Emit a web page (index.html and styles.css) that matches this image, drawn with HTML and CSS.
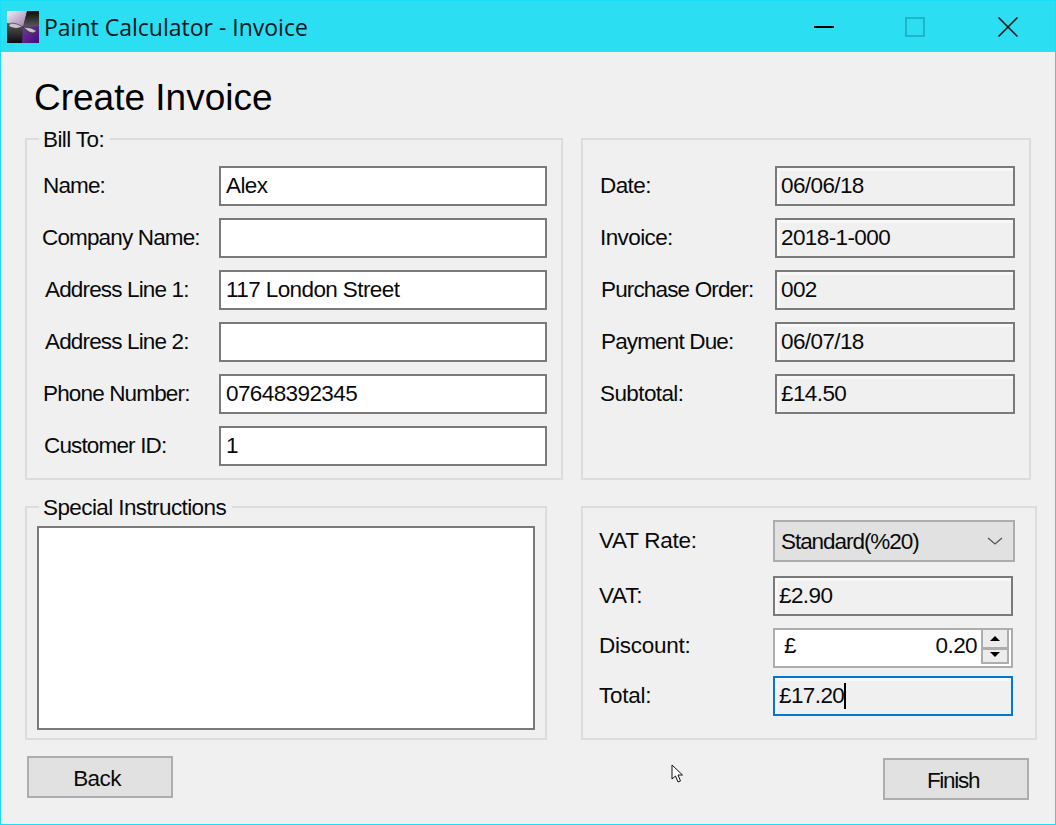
FILE: index.html
```html
<!DOCTYPE html>
<html lang="en">
<head>
<meta charset="utf-8">
<title>Paint Calculator - Invoice</title>
<link rel="stylesheet" href="styles.css">
</head>
<body>
<div class="window">
  <header class="titlebar">
    <svg class="app-icon" viewBox="0 0 32 32" width="32" height="32">
      <defs>
        <linearGradient id="lav" x1="0" y1="0" x2="1" y2="1"><stop offset="0" stop-color="#f2ecf2"/><stop offset="1" stop-color="#9a7cae"/></linearGradient>
        <linearGradient id="pur" x1="0" y1="0" x2="1" y2="1"><stop offset="0" stop-color="#9a6ab0"/><stop offset="1" stop-color="#44087c"/></linearGradient>
        <linearGradient id="drk" x1="0" y1="0" x2="0" y2="1"><stop offset="0" stop-color="#0c0c0c"/><stop offset="1" stop-color="#5a5a5a"/></linearGradient>
        <linearGradient id="drk2" x1="0" y1="0" x2="0" y2="1"><stop offset="0" stop-color="#5a5a5a"/><stop offset="1" stop-color="#0c0c0c"/></linearGradient>
      </defs>
      <rect width="32" height="32" fill="url(#pur)"/>
      <polygon points="0,0 20,0 16,16 0,12" fill="url(#lav)"/>
      <polygon points="20,0 32,0 32,15 16,16" fill="url(#drk)"/>
      <polygon points="0,12 16,16 15,32 0,32" fill="url(#drk2)"/>
      <polygon points="1,14 5,12 10,13 16,16 9,17.5 4,16.5" fill="#c8c4c8" stroke="#222" stroke-width=".6"/>
      <polygon points="16,16 24,17 30,20 26,22 22,21" fill="#c8c4c8" stroke="#222" stroke-width=".6"/>
    </svg>
    <span class="app-title">Paint Calculator - Invoice</span>
    <div class="caption">
      <svg class="cap-btn cap-min" viewBox="0 0 20 20" width="20" height="20"><rect y="9" width="20" height="2" fill="#000"/></svg>
      <svg class="cap-btn cap-max" viewBox="0 0 20 20" width="20" height="20"><rect x="1" y="1" width="18" height="18" fill="none" stroke="#1fb4ca" stroke-width="2"/></svg>
      <svg class="cap-btn" viewBox="0 0 20 20" width="20" height="20"><path d="M0.5 0.5L19.5 19.5M19.5 0.5L0.5 19.5" stroke="#111" stroke-width="1.5" fill="none"/></svg>
    </div>
  </header>

  <main class="content">
    <h1 class="heading">Create Invoice</h1>

    <div class="row-top">
      <section class="group group-bill">
        <span class="legend">Bill To:</span>
        <div class="field"><label class="lab lab-43">Name:</label><div class="box box-white">Alex</div></div>
        <div class="field"><label class="lab lab-41">Company Name:</label><div class="box box-white"></div></div>
        <div class="field"><label class="lab lab-45">Address Line 1:</label><div class="box box-white">117 London Street</div></div>
        <div class="field"><label class="lab lab-45">Address Line 2:</label><div class="box box-white"></div></div>
        <div class="field"><label class="lab lab-43">Phone Number:</label><div class="box box-white">07648392345</div></div>
        <div class="field"><label class="lab lab-44">Customer ID:</label><div class="box box-white">1</div></div>
      </section>

      <section class="group group-meta">
        <div class="field"><label class="lab lab-18">Date:</label><div class="box box-grey">06/06/18</div></div>
        <div class="field"><label class="lab lab-18">Invoice:</label><div class="box box-grey">2018-1-000</div></div>
        <div class="field"><label class="lab lab-20">Purchase Order:</label><div class="box box-grey">002</div></div>
        <div class="field"><label class="lab lab-20">Payment Due:</label><div class="box box-grey">06/07/18</div></div>
        <div class="field"><label class="lab lab-18">Subtotal:</label><div class="box box-grey">£14.50</div></div>
      </section>
    </div>

    <div class="row-mid">
      <section class="group group-notes">
        <span class="legend">Special Instructions</span>
        <div class="notes"></div>
      </section>

      <section class="group group-tax">
        <div class="tax-row tax-vat-rate">
          <label class="tax-lab">VAT Rate:</label>
          <div class="combo"><span class="combo-text">Standard(%20)</span>
            <svg viewBox="0 0 16 8" width="16" height="8"><path d="M1 1L8 7L15 1" fill="none" stroke="#555" stroke-width="1.3"/></svg>
          </div>
        </div>
        <div class="tax-row tax-vat">
          <label class="tax-lab">VAT:</label>
          <div class="box box-grey box-tax">£2.90</div>
        </div>
        <div class="tax-row tax-discount">
          <label class="tax-lab">Discount:</label>
          <div class="spin">
            <span class="spin-sym">£</span><span class="spin-val">0.20</span>
            <div class="spin-btns">
              <div class="spin-btn spin-up"><svg viewBox="0 0 10 5" width="10" height="5"><polygon points="5,0 10,5 0,5" fill="#000"/></svg></div>
              <div class="spin-btn spin-down"><svg viewBox="0 0 10 5" width="10" height="5"><polygon points="0,0 10,0 5,5" fill="#000"/></svg></div>
            </div>
          </div>
        </div>
        <div class="tax-row tax-total">
          <label class="tax-lab">Total:</label>
          <div class="box box-grey box-tax box-focus">£17.20<span class="caret"></span></div>
        </div>
      </section>
    </div>

    <div class="row-actions">
      <button class="btn btn-back">Back</button>
      <button class="btn btn-finish">Finish</button>
    </div>
  </main>

  <svg class="pointer" viewBox="0 0 13 20" width="13" height="20"><path d="M1 1V15L4.5 12L7 18L9.5 17L7 11H11.5Z" fill="#fff" stroke="#111" stroke-width="1"/></svg>
</div>
</body>
</html>
```
FILE: styles.css
```css
* { box-sizing: border-box; }
html, body { margin: 0; padding: 0; }
body { width: 1056px; height: 825px; overflow: hidden; font-family: "Liberation Sans", Arial, sans-serif; font-size: 22.5px; letter-spacing: -0.6px; color: #0a0a0a; }
.window { position: relative; width: 1056px; height: 825px; border: 1px solid #17dff5; background: #f0f0f0; display: flex; flex-direction: column; }
.titlebar { height: 51px; background: #2bdef2; display: flex; align-items: center; padding-left: 6px; flex: none; }
.app-icon { flex: none; margin-right: 5px; }
.app-title { font-family: "Open Sans", sans-serif; font-size: 23px; letter-spacing: 0; color: #06161c; }
.caption { margin-left: auto; display: flex; padding-right: 37px; }
.cap-btn { display: block; }
.cap-min { margin-right: 71px; }
.cap-max { margin-right: 73px; }
.content { flex: 1; padding: 0 0 0 24px; display: flex; flex-direction: column; }
.heading { margin: 23px 0 0 9px; height: 63px; font-size: 37px; font-weight: 400; line-height: 46px; letter-spacing: 0; color: #000; }
.row-top, .row-mid { display: flex; }
.row-top { gap: 18px; }
.row-mid { gap: 34px; margin-top: 26px; }
.group { position: relative; border: 2px solid #dcdcdc; flex: none; }
.legend { position: absolute; left: 12px; top: -12px; padding: 0 6px 0 4px; background: #f0f0f0; line-height: 24px; }
.group-bill { width: 538px; height: 342px; padding: 26px 14px 0 0; display: flex; flex-direction: column; gap: 12px; }
.group-meta { width: 450px; height: 342px; padding: 26px 14px 0 0; display: flex; flex-direction: column; gap: 12px; }
.field { display: flex; align-items: center; height: 40px; }
.lab { flex: none; white-space: nowrap; }
.group-bill .lab { width: 192px; letter-spacing: -0.85px; }
.group-meta .lab { width: 192px; }
.lab-41 { padding-left: 15px; }
.lab-43 { padding-left: 16px; }
.lab-44 { padding-left: 17px; }
.lab-45 { padding-left: 18px; }
.lab-18 { padding-left: 17px; }
.group-meta .lab-20 { padding-left: 18px; letter-spacing: -0.85px; }
.box { height: 40px; border: 2px solid #7a7a7a; padding: 0 4px; display: flex; align-items: center; white-space: nowrap; flex: none; }
.box-white { width: 328px; background: #fff; padding-left: 5px; }
.box-grey { width: 240px; background: #f0f0f0; box-shadow: inset 3px 3px 0 #f8f8f8; }
.group-notes { width: 522px; height: 234px; padding: 18px 10px 8px 10px; }
.notes { height: 100%; background: #fff; border: 2px solid #7a7a7a; }
.group-tax { width: 456px; height: 234px; padding: 12px 0 0 16px; }
.tax-row { display: flex; align-items: center; }
.tax-lab { width: 174px; flex: none; letter-spacing: -0.25px; }
.tax-vat-rate { height: 42px; }
.tax-vat { height: 40px; margin-top: 14px; }
.tax-discount { height: 40px; margin-top: 12px; }
.tax-discount .tax-lab { padding-bottom: 4px; }
.tax-total { height: 40px; margin-top: 8px; }
.combo { width: 242px; height: 42px; background: #e1e1e1; border: 2px solid #adadad; display: flex; align-items: center; justify-content: space-between; padding: 0 10px 0 6px; }
.combo-text { letter-spacing: -1.05px; padding-top: 2px; }
.box-tax { width: 240px; }
.box-focus { border-color: #0078d7; }
.caret { display: inline-block; width: 2px; height: 26px; background: #000; margin-left: 0; }
.spin { width: 240px; height: 40px; background: #fff; border: 2px solid #adadad; display: flex; align-items: center; padding: 0 2px 0 9px; }
.spin-sym { flex: none; padding-bottom: 4px; }
.spin-val { margin-left: auto; margin-right: 4px; padding-bottom: 4px; }
.spin-btns { width: 28px; height: 34px; align-self: flex-start; display: flex; flex-direction: column; flex: none; }
.spin-btn { background: #ececec; border: solid #adadad; border-width: 0 2px 2px; display: flex; align-items: center; justify-content: center; }
.spin-up { height: 20px; border-bottom-width: 3px; }
.spin-down { height: 14px; padding-bottom: 3px; }
.row-actions { display: flex; justify-content: space-between; margin: 16px 0 0 2px; padding-right: 26px; align-items: flex-start; }
.btn { width: 146px; height: 42px; background: #e1e1e1; border: 2px solid #adadad; font: inherit; letter-spacing: inherit; color: inherit; padding: 4px 6px 0 0; }
.btn-finish { margin-top: 2px; letter-spacing: -1.3px; }
.pointer { position: absolute; left: 670px; top: 763px; }
```
